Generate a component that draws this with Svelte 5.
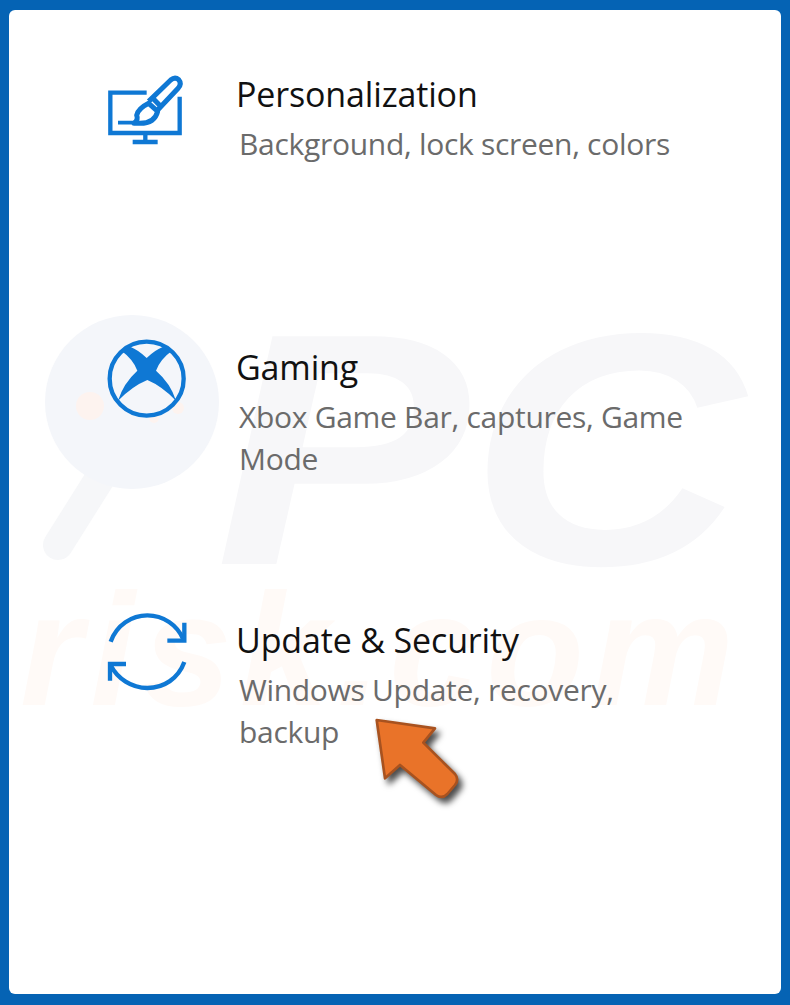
<script>
  const items = [
    { id: 'personalization', title: 'Personalization', desc: ['Background, lock screen, colors'] },
    { id: 'gaming', title: 'Gaming', desc: ['Xbox Game Bar, captures, Game', 'Mode'] },
    { id: 'update', title: 'Update & Security', desc: ['Windows Update, recovery,', 'backup'] }
  ];
</script>

<main class="frame">
  <div class="panel">
    <div class="watermark" aria-hidden="true">
      <svg class="lens" viewBox="0 0 200 270" width="200" height="270">
        <path d="M72 165 L28 235" class="handle" />
        <circle cx="102" cy="92" r="87" class="glass" />
        <circle cx="60" cy="96" r="14" class="spot" />
        <circle cx="124" cy="108" r="5" class="spot" />
        <circle cx="148" cy="98" r="6" class="spot" />
      </svg>
      <span class="mark-pc">PC</span>
      <span class="mark-risk">risk.com</span>
    </div>

    <div class="list">
      {#each items as item}
        <section class="row">
          <div class="icon">
            {#if item.id === 'personalization'}
              <svg viewBox="0 0 360 300" width="120" height="100" fill="none" stroke="#0f78d4" stroke-width="13">
                <path d="M170 98 H61 V219 H269 V110" />
                <path d="M166 222 V246 M128 246 H203" />
                <path d="M84 188 H160" stroke-width="11" />
                <path d="M176 124 L242 60 Q255 49 266 59 Q276 71 265 84 L203 150" stroke-width="15" />
                <path d="M187 113 L214 141" stroke-width="15" />
                <path d="M176 130 L203 154 Q194 190 150 190 H132 Q146 180 140 166 Q144 146 176 130 Z" fill="#fff" stroke-width="15" stroke-linejoin="round" />
              </svg>
            {:else if item.id === 'gaming'}
              <svg viewBox="0 9 360 300" width="120" height="100" fill="none" stroke="#0f78d4">
                <circle cx="170" cy="146" r="111" stroke-width="13" />
                <path
                  d="M120 50 Q146 60 170 84 Q194 60 220 50 L246 62 Q210 88 198 122 Q242 160 258 212 Q215 168 172 150 Q128 168 84 212 Q100 160 142 122 Q130 88 94 62 Z"
                  fill="#0f78d4"
                  stroke="none"
                />
              </svg>
            {:else}
              <svg viewBox="0 18 360 300" width="120" height="100" fill="none" stroke="#0f78d4" stroke-width="13">
                <path d="M62 125 C80 75 125 46 172 46 C220 46 262 75 280 118" />
                <path d="M283 68 V122 H232" />
                <path d="M283 186 C265 235 222 264 172 264 C125 264 82 236 62 196" />
                <path d="M60 242 V192 H108" />
              </svg>
            {/if}
          </div>
          <div class="text">
            <h2>{item.title}</h2>
            {#each item.desc as line}
              <p>{line}</p>
            {/each}
          </div>
        </section>
      {/each}
    </div>

    <svg class="pointer" viewBox="0 0 360 360" width="120" height="120">
      <path
        d="M50 60 L225 85 L190 128 L285 222 Q298 238 285 255 L262 282 Q246 298 228 285 L120 195 L75 235 Z"
        fill="#e97329"
        stroke="#a8521f"
        stroke-width="8"
        stroke-linejoin="round"
      />
    </svg>
  </div>
</main>

<style>
  :global(body) {
    margin: 0;
    background: #0563b4;
  }

  .frame {
    box-sizing: border-box;
    width: 790px;
    height: 1005px;
    padding: 10px 9px 11px;
    background: #0563b4;
    font-family: "Open Sans", "Noto Sans", sans-serif;
  }

  .panel {
    position: relative;
    height: 100%;
    overflow: hidden;
    background: #fff;
    border-radius: 6px;
  }

  .watermark {
    position: absolute;
    inset: -10px -9px;
  }

  .lens {
    position: absolute;
    left: 30px;
    top: 310px;
  }

  .glass {
    fill: #f4f6fa;
  }

  .handle {
    stroke: #f6f7f9;
    stroke-width: 30;
    stroke-linecap: round;
    fill: none;
  }

  .spot {
    fill: #fdf3ef;
  }

  .mark-pc,
  .mark-risk {
    position: absolute;
    font-family: "Liberation Sans", sans-serif;
    font-weight: 700;
    font-style: italic;
    line-height: 1;
    white-space: nowrap;
    transform-origin: left top;
  }

  .mark-pc {
    left: 215px;
    top: 284px;
    font-size: 331px;
    color: #f7f7f9;
    transform: scaleX(1.15);
  }

  .mark-risk {
    left: 20px;
    top: 570px;
    font-size: 160px;
    letter-spacing: 8px;
    color: #fffaf7;
  }

  .list {
    position: relative;
    display: grid;
    grid-auto-rows: 273px;
    padding-top: 50px;
  }

  .row {
    display: flex;
    padding-left: 81px;
  }

  .icon {
    flex: none;
    width: 146px;
    height: 100px;
  }

  .icon svg {
    display: block;
  }

  .text {
    padding-top: 11px;
  }

  h2 {
    margin: 0 0 6px;
    font-size: 34px;
    line-height: 46px;
    font-weight: 400;
    letter-spacing: -0.15px;
    color: #111;
  }

  p {
    margin: 0 0 0 3px;
    font-size: 30px;
    line-height: 42px;
    letter-spacing: -0.3px;
    color: #6b6b6b;
  }

  .pointer {
    position: absolute;
    left: 351px;
    top: 690px;
    filter: drop-shadow(4px 5px 3px rgba(0, 0, 0, 0.7));
  }
</style>
